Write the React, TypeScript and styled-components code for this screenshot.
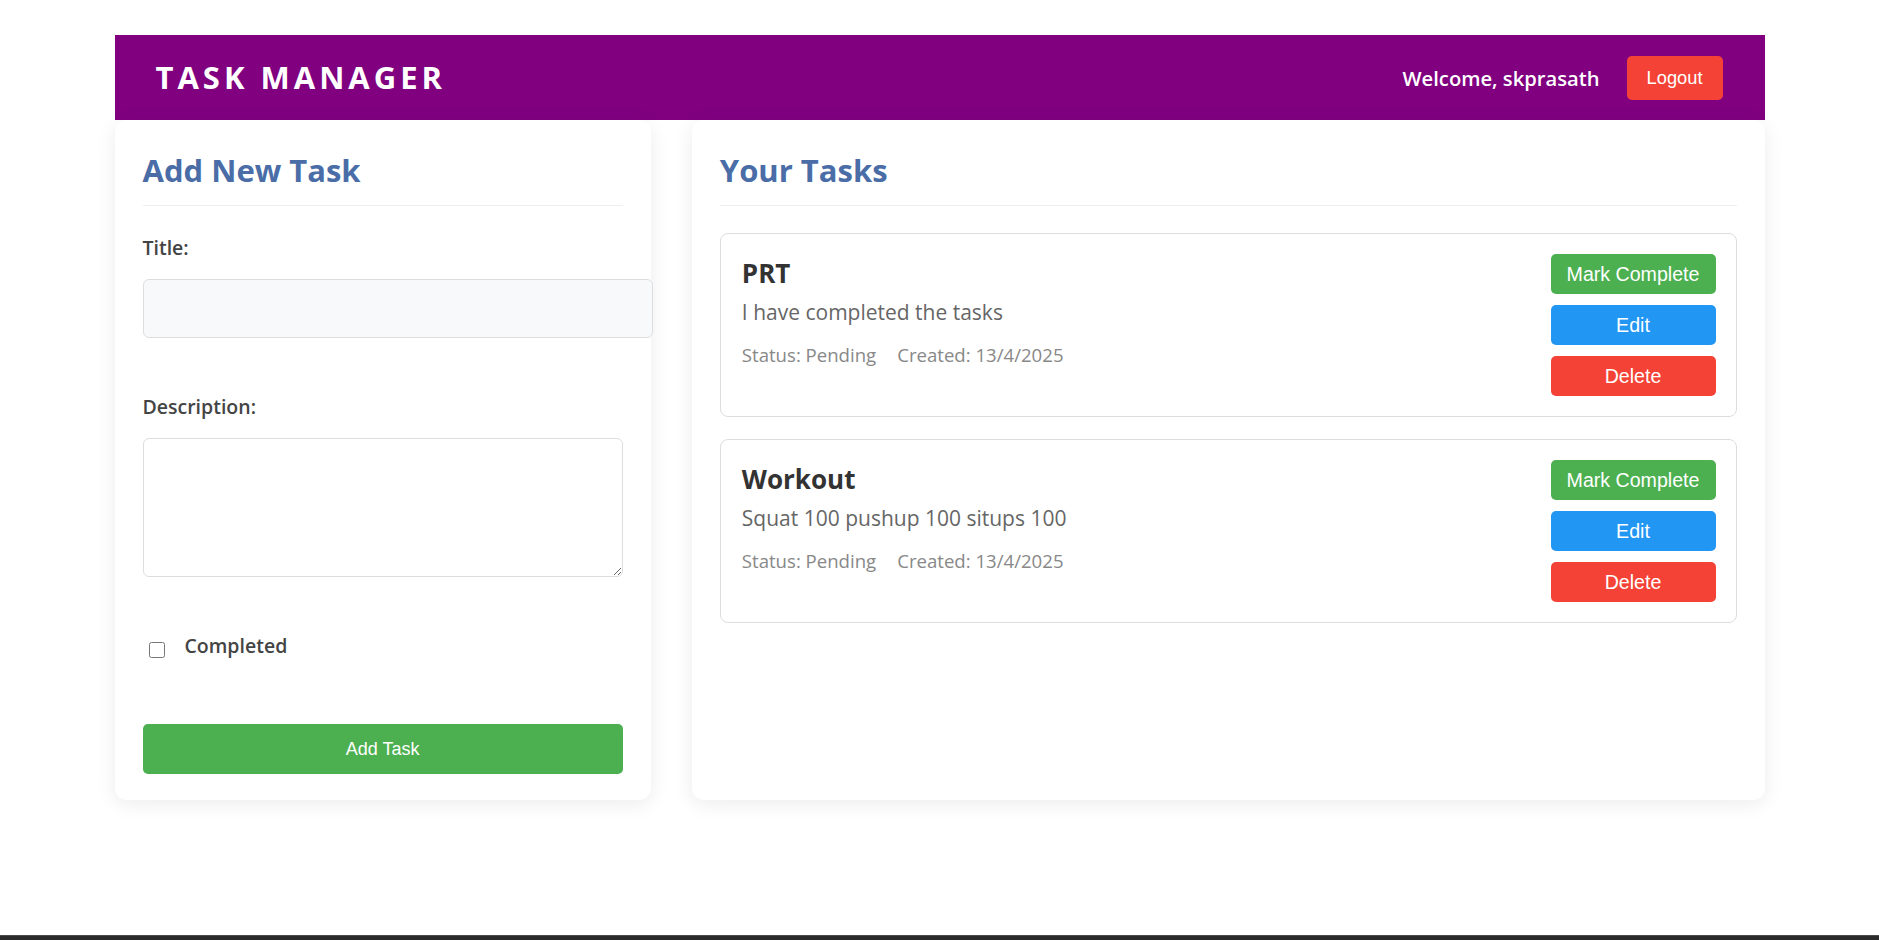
import React from "react";
import styled, { createGlobalStyle } from "styled-components";

const GlobalStyle = createGlobalStyle`
  html, body {
    margin: 0;
    padding: 0;
    background: #ffffff;
  }
  body {
    font-family: "Open Sans", "Noto Sans", sans-serif;
  }
  * {
    box-sizing: border-box;
  }
`;

const Screen = styled.div`
  min-height: 100vh;
  display: flex;
  flex-direction: column;
  justify-content: space-between;
`;

const Page = styled.div`
  width: 1650px;
  margin: 0 auto;
  padding-top: 35px;
`;

const BottomStrip = styled.div`
  height: 5px;
  background: #2b2b2b;
  border-top: 1px solid #4a4a4a;
`;

const Header = styled.header`
  height: 85px;
  background: #800080;
  display: flex;
  align-items: center;
  justify-content: space-between;
  padding: 0 42px 0 41px;
`;

const Brand = styled.h1`
  margin: 0;
  color: #ffffff;
  font-size: 31px;
  font-weight: 700;
  letter-spacing: 4px;
  line-height: 1;
`;

const UserArea = styled.div`
  display: flex;
  align-items: center;
  gap: 27px;
`;

const Welcome = styled.span`
  color: #ffffff;
  font-size: 20.2px;
  font-weight: 600;
`;

const Button = styled.button<{ $tone: "green" | "blue" | "red" }>`
  border: none;
  border-radius: 5px;
  color: #ffffff;
  cursor: pointer;
  font-family: "Liberation Sans", Arial, sans-serif;
  font-size: 19.6px;
  background: ${(p) =>
    p.$tone === "green" ? "#4caf50" : p.$tone === "blue" ? "#2196f3" : "#f44336"};
`;

const LogoutButton = styled(Button)`
  height: 44px;
  padding: 0 20px;
  font-size: 18.3px;
`;

const Columns = styled.main`
  display: grid;
  grid-template-columns: 1fr 2fr;
  gap: 41px;
`;

const Panel = styled.section`
  display: flex;
  flex-direction: column;
  background: #ffffff;
  border-radius: 12px;
  box-shadow: 0 4px 20px rgba(0, 0, 0, 0.08);
  padding: 30px 28px 26px;
`;

const PanelTitle = styled.h2`
  margin: 0 0 27px;
  padding-bottom: 15px;
  border-bottom: 1px solid #eeeeee;
  color: #4a6da7;
  font-size: 31px;
  font-weight: 700;
  line-height: 40px;
`;

const FormGroup = styled.div`
  margin-bottom: 54px;
`;

const Label = styled.label`
  display: block;
  margin-bottom: 16px;
  color: #444444;
  font-size: 19.5px;
  font-weight: 600;
  line-height: 30px;
`;

const TextInput = styled.input`
  display: block;
  box-sizing: content-box;
  width: 100%;
  height: 29.4px;
  padding: 14px;
  border: 1px solid #dddddd;
  border-radius: 6px;
  background: #f8f9fa;
  font-family: inherit;
  font-size: 19px;
`;

const TextArea = styled.textarea`
  display: block;
  width: 100%;
  height: 139px;
  padding: 14px;
  border: 1px solid #dddddd;
  border-radius: 6px;
  background: #ffffff;
  font-family: inherit;
  font-size: 19px;
`;

const CheckRow = styled.label`
  display: flex;
  align-items: flex-start;
  gap: 20px;
  color: #444444;
  font-size: 19.5px;
  font-weight: 600;
  line-height: 30px;
`;

const CheckBox = styled.input`
  width: 16px;
  height: 16px;
  margin: 11px 0 0 6px;
`;

const SubmitButton = styled(Button)`
  display: block;
  width: 100%;
  height: 50px;
  margin-top: 9px;
  font-size: 18px;
`;

const TaskList = styled.div`
  display: flex;
  flex-direction: column;
  gap: 22px;
`;

const TaskCard = styled.article`
  display: flex;
  justify-content: space-between;
  align-items: flex-start;
  border: 1px solid #dddddd;
  border-radius: 8px;
  padding: 20px 20px 20px 21px;
`;

const TaskBody = styled.div`
  display: flex;
  flex-direction: column;
`;

const TaskTitle = styled.h3`
  margin: 0;
  color: #333333;
  font-size: 26px;
  font-weight: 700;
  line-height: 38px;
`;

const TaskText = styled.p`
  margin: 5px 0 0;
  color: #666666;
  font-size: 21px;
  line-height: 1.5;
`;

const TaskMeta = styled.div`
  margin-top: 12px;
  display: flex;
  gap: 21px;
  color: #888888;
  font-size: 18.6px;
  line-height: 1.5;
`;

const TaskActions = styled.div`
  display: flex;
  flex-direction: column;
  gap: 11px;
  width: 165px;
`;

const ActionButton = styled(Button)`
  height: 40px;
  width: 100%;
`;

const tasks = [
  { id: 1, title: "PRT", description: "I have completed the tasks", created: "13/4/2025" },
  { id: 2, title: "Workout", description: "Squat 100 pushup 100 situps 100", created: "13/4/2025" },
];

export default function App() {
  return (
    <Screen>
      <GlobalStyle />
      <Page>
        <Header>
          <Brand>TASK MANAGER</Brand>
          <UserArea>
            <Welcome>Welcome, skprasath</Welcome>
            <LogoutButton $tone="red">Logout</LogoutButton>
          </UserArea>
        </Header>
        <Columns>
          <Panel>
            <PanelTitle>Add New Task</PanelTitle>
            <FormGroup>
              <Label htmlFor="title">Title:</Label>
              <TextInput id="title" type="text" />
            </FormGroup>
            <FormGroup>
              <Label htmlFor="description">Description:</Label>
              <TextArea id="description" />
            </FormGroup>
            <FormGroup>
              <CheckRow>
                <CheckBox type="checkbox" />
                Completed
              </CheckRow>
            </FormGroup>
            <SubmitButton $tone="green">Add Task</SubmitButton>
          </Panel>
          <Panel>
            <PanelTitle>Your Tasks</PanelTitle>
            <TaskList>
              {tasks.map((t) => (
                <TaskCard key={t.id}>
                  <TaskBody>
                    <TaskTitle>{t.title}</TaskTitle>
                    <TaskText>{t.description}</TaskText>
                    <TaskMeta>
                      <span>Status: Pending</span>
                      <span>Created: {t.created}</span>
                    </TaskMeta>
                  </TaskBody>
                  <TaskActions>
                    <ActionButton $tone="green">Mark Complete</ActionButton>
                    <ActionButton $tone="blue">Edit</ActionButton>
                    <ActionButton $tone="red">Delete</ActionButton>
                  </TaskActions>
                </TaskCard>
              ))}
            </TaskList>
          </Panel>
        </Columns>
      </Page>
      <BottomStrip />
    </Screen>
  );
}
